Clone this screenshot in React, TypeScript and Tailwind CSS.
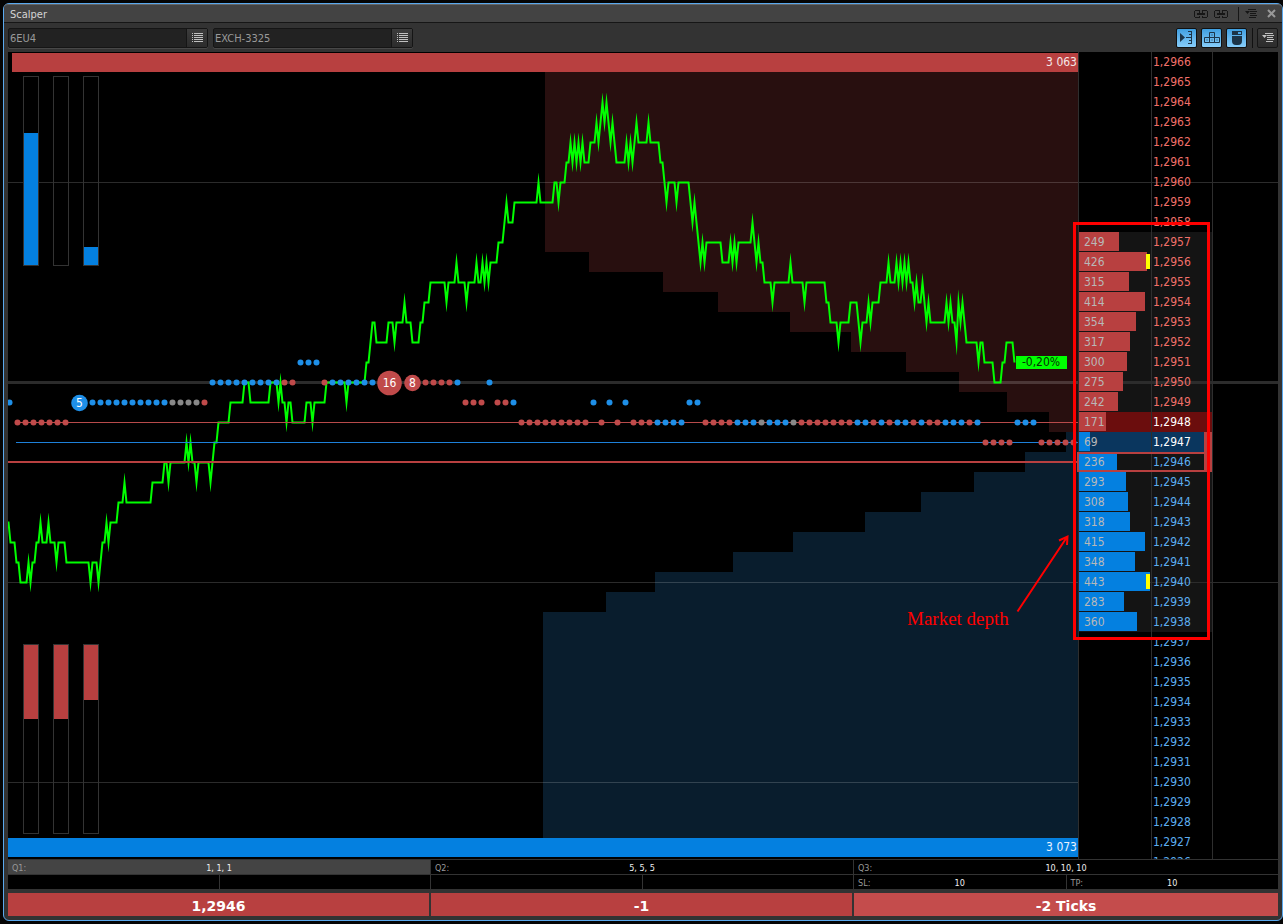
type Side = "ask" | "bid";

interface DepthRow {
  price: number;
  volume?: number;
  side: Side;
}

const FULL_BAR_VOLUME = 450;
const BEST_ASK = 12948;
const BEST_BID = 12947;
const LAST_PRICE = 12946;

const VOLUMES: Record<number, number> = {
  12957: 249,
  12956: 426,
  12955: 315,
  12954: 414,
  12953: 354,
  12952: 317,
  12951: 300,
  12950: 275,
  12949: 242,
  12948: 171,
  12947: 69,
  12946: 236,
  12945: 293,
  12944: 308,
  12943: 318,
  12942: 415,
  12941: 348,
  12940: 443,
  12939: 283,
  12938: 360,
};

const ROWS: DepthRow[] = Array.from({ length: 41 }, (_, i) => {
  const price = 12966 - i;
  return { price, volume: VOLUMES[price], side: price >= BEST_ASK ? "ask" : "bid" };
});

const formatPrice = (p: number) => `1,${String(p).slice(1)}`;

// Price curve: x, then ticks away from 1,2950
const CURVE: number[][] = [
  [8, -7], [9, -7], [11, -8], [15, -8], [17, -9], [19, -9], [21, -10], [27, -10], [29, -9], [31, -10],
  [33, -9], [35, -9], [37, -8], [39, -8], [41, -7], [43, -8], [47, -8], [49, -7], [51, -8], [55, -8],
  [57, -9], [59, -8], [65, -8], [67, -9], [89, -9], [91, -10], [93, -9], [97, -9], [99, -10], [101, -9],
  [103, -8], [105, -8], [107, -7], [109, -8], [111, -7], [117, -7], [119, -6], [123, -6], [125, -5], [127, -6],
  [151, -6], [153, -5], [163, -5], [165, -4], [167, -4], [169, -5], [171, -4], [185, -4], [187, -3], [189, -4],
  [191, -3], [193, -4], [195, -4], [197, -5], [199, -4], [209, -4], [211, -5], [213, -4], [215, -3], [217, -3],
  [219, -2], [229, -2], [231, -1], [243, -1], [245, 0], [249, 0], [251, -1], [269, -1], [271, 0], [277, 0],
  [279, -1], [281, 0], [283, -1], [285, -1], [287, -2], [289, -1], [291, -1], [293, -2], [305, -2], [307, -1],
  [311, -1], [313, -2], [315, -1], [325, -1], [327, 0], [345, 0], [347, -1], [349, 0], [365, 0], [367, 1],
  [369, 1], [371, 2], [373, 3], [375, 3], [377, 2], [387, 2], [389, 3], [393, 3], [395, 2], [397, 3],
  [403, 3], [405, 4], [407, 3], [411, 3], [413, 2], [419, 2], [421, 3], [423, 3], [425, 4], [429, 4],
  [431, 5], [445, 5], [447, 4], [449, 5], [455, 5], [457, 6], [459, 5], [465, 5], [467, 4], [469, 5],
  [475, 5], [477, 6], [479, 5], [481, 5], [483, 6], [485, 5], [487, 6], [489, 5], [491, 6], [497, 6],
  [499, 7], [503, 7], [505, 8], [507, 9], [509, 8], [513, 8], [515, 9], [537, 9], [539, 10], [541, 9],
  [553, 9], [555, 10], [557, 10], [559, 9], [561, 10], [565, 10], [567, 11], [569, 11], [571, 12], [573, 11],
  [575, 12], [577, 11], [579, 12], [581, 11], [583, 12], [585, 11], [589, 11], [591, 12], [595, 12], [597, 13],
  [599, 12], [601, 13], [603, 14], [605, 13], [607, 14], [609, 13], [611, 12], [613, 13], [615, 12], [617, 11],
  [625, 11], [627, 12], [629, 11], [631, 12], [633, 11], [635, 12], [637, 13], [639, 12], [647, 12], [649, 13],
  [651, 12], [659, 12], [661, 11], [663, 11], [665, 10], [667, 9], [669, 10], [675, 10], [677, 9], [679, 10],
  [689, 10], [691, 9], [693, 8], [695, 9], [697, 8], [699, 7], [701, 6], [703, 7], [705, 6], [707, 7],
  [721, 7], [723, 6], [729, 6], [731, 7], [733, 6], [735, 7], [737, 6], [739, 7], [751, 7], [753, 8],
  [755, 7], [757, 6], [759, 7], [761, 6], [763, 6], [765, 5], [771, 5], [773, 4], [775, 5], [789, 5],
  [791, 6], [793, 5], [803, 5], [805, 4], [807, 5], [825, 5], [827, 4], [829, 4], [831, 3], [837, 3],
  [839, 2], [841, 3], [849, 3], [851, 4], [857, 4], [859, 3], [861, 2], [863, 3], [867, 3], [869, 4],
  [871, 3], [873, 4], [879, 4], [881, 5], [887, 5], [889, 6], [891, 5], [895, 5], [897, 6], [899, 5],
  [901, 6], [903, 5], [905, 6], [907, 5], [909, 6], [911, 5], [913, 5], [915, 4], [917, 5], [919, 4],
  [921, 4], [923, 5], [925, 4], [927, 3], [929, 4], [931, 3], [945, 3], [947, 4], [949, 3], [951, 4],
  [953, 3], [955, 3], [957, 2], [959, 4], [961, 3], [963, 4], [965, 3], [967, 2], [977, 2], [979, 1],
  [981, 2], [983, 2], [985, 1], [993, 1], [995, 0], [1001, 0], [1003, 1], [1005, 1], [1007, 2], [1013, 2],
  [1015, 1],
];

// Trade prints, one letter per 8px slot: r sell, b buy, g neutral
const TRADES: { tick: number; x: number; run: string }[] = [
  { tick: 1, x: 300, run: "bbb" },
  { tick: 0, x: 212, run: "bbbbbbbbbrr" },
  { tick: 0, x: 324, run: "rbbbbbb" },
  { tick: 0, x: 425, run: "rrrrb...b" },
  { tick: -1, x: 9, run: "b" },
  { tick: -1, x: 92, run: "bbbbbbbbbbggggr" },
  { tick: -1, x: 465, run: "rrr.rrb.........b.b.b.......bb" },
  { tick: -2, x: 17, run: "rrrrrrr" },
  { tick: -2, x: 521, run: "rrrrrrrrr.r.r.rrrbbbb..rrrrbbbgbbbgrrrrrrrbbrbrbbrbrrbbbrb....bbb" },
  { tick: -3, x: 985, run: "rrrr...rrrrr" },
];

const TRADE_COLORS: Record<string, string> = { r: "#c04a4a", b: "#1e8fe8", g: "#888888" };

const BIG_TRADES = [
  { x: 79, tick: -1, r: 8, label: "5", color: "#1e8fe8" },
  { x: 389, tick: 0, r: 12, label: "16", color: "#c04a4a" },
  { x: 412, tick: 0, r: 8, label: "8", color: "#c04a4a" },
];

const tickY = (tick: number) => 382 - tick * 20;

function Chart() {
  return (
    <svg
      viewBox="8 52 1070 807"
      preserveAspectRatio="xMaxYMin slice"
      className="absolute inset-0 h-full w-full font-['DejaVu_Sans_Condensed','Noto_Sans',sans-serif]"
    >
      {/* Cumulative depth */}
      <path
        fill="#280f0f"
        d="M545 72V252H589V272H663V292H718V312H790V332H851V352H906V372H959V392H1007V412H1049V432H1078V72Z"
      />
      <path
        fill="#091d2d"
        d="M1078 432H1066V452H1025V472H974V492H921V512H865V532H793V552H733V572H655V592H606V612H543V838H1078Z"
      />

      <g fill="#fff" fillOpacity="0.17">
        <rect x="8" y="182" width="1070" height="1" />
        <rect x="8" y="381" width="1070" height="3" />
        <rect x="8" y="582" width="1070" height="1" />
        <rect x="8" y="782" width="1070" height="1" />
      </g>

      {/* Volume gauges */}
      {[23, 53, 83].map((x) => (
        <g key={x} fill="none" stroke="#333">
          <rect x={x + 0.5} y="76.5" width="15" height="189" />
          <rect x={x + 0.5} y="644.5" width="15" height="189" />
        </g>
      ))}
      <g fill="#0480e0">
        <rect x="24" y="133" width="14" height="132" />
        <rect x="84" y="247" width="14" height="18" />
      </g>
      <g fill="#b84040">
        <rect x="24" y="645" width="14" height="74" />
        <rect x="54" y="645" width="14" height="74" />
        <rect x="84" y="645" width="14" height="55" />
      </g>

      <polyline
        points={CURVE.map(([x, t]) => `${x - 0.5},${tickY(t) + 0.5}`).join(" ")}
        fill="none"
        stroke="#0f0"
        strokeWidth="2"
        strokeMiterlimit="24"
      />

      {/* Best ask, best bid, last price */}
      <rect x="17" y="422" width="1061" height="1" fill="#b84a4a" />
      <rect x="16" y="442" width="1062" height="1" fill="#1e80d8" />
      <rect x="8" y="461" width="1070" height="2" fill="#b84040" />

      {TRADES.map(({ tick, x, run }) =>
        run.split("").map((c, i) =>
          c === "." ? null : (
            <circle key={`${tick}-${x}-${i}`} cx={x + i * 8 + 0.5} cy={tickY(tick) + 0.5} r="3" fill={TRADE_COLORS[c]} />
          ),
        ),
      )}
      {BIG_TRADES.map((t) => (
        <g key={t.label}>
          <circle cx={t.x + 0.5} cy={tickY(t.tick) + 1} r={t.r + 0.3} fill={t.color} />
          <text x={t.x + 0.5} y={tickY(t.tick) + 5} textAnchor="middle" fontSize="12" fill="#fff">
            {t.label}
          </text>
        </g>
      ))}

      <rect x="1016" y="356" width="51" height="13" fill="#0f0" />
      <text x="1041" y="366" textAnchor="middle" fontSize="12" fill="#063006">
        -0,20%
      </text>

      <path d="M1017.5 611.5 1067 537M1059 540.5 1067.5 536.5 1067 545" stroke="#f00" strokeWidth="2" fill="none" />
      <text x="907" y="625" fontSize="19" fill="#f00" className="font-['Liberation_Serif',serif]">
        Market depth
      </text>
    </svg>
  );
}

function rowColors(row: DepthRow) {
  if (row.price === BEST_ASK) return "bg-[#6b0d0d] text-white";
  if (row.price === BEST_BID) return "bg-[#0a365e] text-white";
  const text = row.side === "ask" ? "text-[#f2706a]" : "text-[#5caef2]";
  return row.volume ? `bg-[#141414] ${text}` : text;
}

function gridLine(price: number) {
  if (price === 12950)
    return "bg-[image:linear-gradient(#2c2c2c,#2c2c2c)] bg-[length:100%_3px] bg-[position:0_9px] bg-no-repeat";
  if (price % 20 === 0)
    return "bg-[image:linear-gradient(#2c2c2c,#2c2c2c)] bg-[length:100%_1px] bg-[position:0_10px] bg-no-repeat";
  return "";
}

function DepthLadder() {
  return (
    <table className="w-[200px] table-fixed border-separate border-spacing-0 text-xs">
      <colgroup>
        <col className="w-[73px]" />
        <col className="w-[61px]" />
        <col />
      </colgroup>
      <tbody>
        {ROWS.map((row) => {
          const grid = gridLine(row.price);
          const colors = rowColors(row);
          return (
            <tr key={row.price}>
              <td className={`border-l border-[#2e2e2e] p-0 ${colors} ${grid}`}>
                <div className="relative h-5 pl-[5px] leading-5 text-[#b8b8b8]">
                  {row.volume && (
                    <>
                      <div
                        className={`absolute top-0 left-0 h-[19px] ${row.side === "ask" ? "bg-[#b84040]" : "bg-[#0480e0]"}`}
                        style={{ width: `${(row.volume / FULL_BAR_VOLUME) * 100}%` }}
                      />
                      <span className="relative">{row.volume}</span>
                    </>
                  )}
                  {row.volume && row.volume > 420 && (
                    <div className="absolute top-0.5 right-px h-[15px] w-1 bg-[#ff0]" />
                  )}
                  {row.price === LAST_PRICE && (
                    <div className="absolute top-0 -left-0.5 z-10 h-5 w-[135px] border-2 border-r-8 border-[#b84040]" />
                  )}
                  {row.price === BEST_BID && (
                    <div className="absolute top-0 left-[125px] z-10 h-5 w-2 bg-[#b84040]" />
                  )}
                </div>
              </td>
              <td className={`h-5 border-l border-[#2e2e2e] p-0 pl-px leading-5 ${colors} ${grid}`}>
                {formatPrice(row.price)}
              </td>
              <td className={`border-l border-[#2e2e2e] p-0 ${grid}`} />
            </tr>
          );
        })}
      </tbody>
    </table>
  );
}

function ListIcon() {
  return (
    <svg width="11" height="9" viewBox="0 0 11 9" fill="#c0c0c0">
      {[0, 2, 4, 6, 8].map((y) => (
        <path key={y} d={`M0 ${y}h1v1h-1zM2 ${y}h9v1h-9z`} />
      ))}
    </svg>
  );
}

function MenuIcon({ color }: { color: string }) {
  return (
    <svg width="12" height="9" viewBox="0 0 12 9" fill={color}>
      <path d="M3 0h8v1H3zM5 2h7v1H5zM5 4h6v1H5zM5 6h7v1H5zM4 8h7v1H4zM0 2h5L2.5 5z" />
    </svg>
  );
}

function LinkIcon() {
  return (
    <svg width="14" height="8" viewBox="0 0 14 8" fill="none" stroke="#161616" shapeRendering="crispEdges">
      <path d="M5.5 2.5V.5H1.5L.5 1.5V6.500L1.5 7.5H5.5V5.5M8.5 2.5V.5H12.5L13.5 1.5V6.500L12.5 7.5H8.5V5.5" />
      <path d="M3 4H11" strokeWidth="2" />
    </svg>
  );
}

function Picker({ id, label, value }: { id: string; label: string; value: string }) {
  return (
    <div className="flex h-5 w-[200px] rounded-xs border border-[#151515] bg-[#222] shadow-[0_1px_0_#484848]">
      <label htmlFor={id} className="sr-only">
        {label}
      </label>
      <input
        id={id}
        defaultValue={value}
        className="h-[18px] min-w-0 flex-1 bg-transparent pt-px pl-px text-[11px] leading-4 text-[#999] outline-none"
      />
      <button
        aria-label={`Choose ${label}`}
        className="flex w-[21px] items-center justify-center border-l border-[#151515] bg-linear-to-b from-[#3c3c3c] to-[#2c2c2c]"
      >
        <ListIcon />
      </button>
    </div>
  );
}

const TOOL_BUTTON =
  "flex h-5 w-[21px] items-center justify-center rounded-xs border border-[#111] bg-linear-to-b from-[#3f9fe0] to-[#86cdfa]";

function Toolbar() {
  return (
    <div className="flex h-[29px] shrink-0 items-center gap-[5px] px-1">
      <Picker id="instrument" label="instrument" value="6EU4" />
      <Picker id="account" label="account" value="EXCH-3325" />
      <div className="ml-auto flex items-center gap-1">
        <button className={TOOL_BUTTON} aria-label="Center on price">
          <svg width="15" height="13" viewBox="0 0 15 13" fill="#1c3448">
            <path d="M1 2v9l5-4.5zM12 0h1v13h-1zM9 0h3v1H9zM10 3h2v1h-2zM7 6h5v1H7zM10 9h2v1h-2zM9 12h3v1H9z" />
          </svg>
        </button>
        <button className={TOOL_BUTTON} aria-label="Hot keys">
          <svg width="16" height="11" viewBox="0 0 16 11" className="shrink-0" fill="none" stroke="#1c3448">
            <path d="M5.5 .5h5v5h-5zM.5 5.5h5v5h-5zM5.5 5.5h5v5h-5zM10.5 5.5h5v5h-5z" />
            <path d="M7.500 3h1M2.5 8h1M7.5 8h1M12.5 8h1" />
          </svg>
        </button>
        <button className={TOOL_BUTTON} aria-label="Mouse trading">
          <svg width="10" height="14" viewBox="0 0 10 14" fill="#1c3448">
            <path d="M0 0h5v4H0zM5 0h5v4H5zM0 5h10v5q0 4-4 4h-2q-4 0-4-4z" />
            <path d="M6 1h3v2H6z" fill="#4ca8e8" />
          </svg>
        </button>
        <div className="ml-px h-5 w-px bg-[#111]" />
        <button
          aria-label="Settings"
          className="flex h-5 w-[21px] items-center justify-center rounded-xs border border-[#161616] bg-linear-to-b from-[#3a3a3a] to-[#2c2c2c]"
        >
          <MenuIcon color="#c0c0c0" />
        </button>
      </div>
    </div>
  );
}

function TitleBar() {
  return (
    <div className="flex h-[19px] shrink-0 items-center rounded-t-sm border-t border-b border-t-[#666] border-b-[#161616] bg-[#434343] pr-1.5 pl-1.5">
      <h1 className="pt-0.5 text-[11px] leading-[15px] text-[#d4d4d4]">Scalper</h1>
      <div className="ml-auto flex items-center gap-[6px]">
        <button aria-label="Link instrument">
          <LinkIcon />
        </button>
        <button aria-label="Link account">
          <LinkIcon />
        </button>
        <div className="ml-1 h-[14px] w-px bg-[#161616]" />
        <button aria-label="Window menu">
          <MenuIcon color="#161616" />
        </button>
        <button aria-label="Close" className="ml-1">
          <svg width="9" height="9" viewBox="0 0 9 9" stroke="#999" strokeWidth="2">
            <path d="M1 1l7 7M8 1 1 8" />
          </svg>
        </button>
      </div>
    </div>
  );
}

function Quantity({ label, value, active }: { label: string; value: string; active?: boolean }) {
  return (
    <div className={`flex h-[14px] px-1 pt-0.5 leading-3 ${active ? "bg-[#444]" : "bg-black"}`}>
      <span className="flex-1 text-[#999]">{label}</span>
      <span className="text-[#eee]">{value}</span>
      <span className="flex-1" />
    </div>
  );
}

const ORDER_BUTTON = "h-[23px] pt-0.5 leading-5";

export default function App() {
  return (
    <div className="flex h-screen bg-[#050505] pt-[3px] pb-[3px] pl-[3px] font-['DejaVu_Sans_Condensed','Noto_Sans',sans-serif]">
      <div className="flex min-w-0 flex-1 flex-col rounded-md border border-[#5aa9ee] bg-[#333]">
        <TitleBar />
        <Toolbar />

        <div className="relative mx-1 flex min-h-0 flex-1 overflow-hidden bg-black">
          <main className="relative flex min-w-0 flex-1 flex-col justify-between">
            <Chart />
            <div className="relative mt-px ml-1 h-[19px] bg-[#b84040] pr-px text-right text-xs leading-[19px] text-[#f4e8e8]">
              3 063
            </div>
            <div className="relative mb-0.5 h-[19px] bg-[#0480e0] pr-px text-right text-xs leading-[19px] text-[#e8f2ff]">
              3 073
            </div>
          </main>
          <DepthLadder />
          {/* Callout around the depth rows */}
          <div className="pointer-events-none absolute top-[170px] right-[68px] z-20 h-[418px] w-[137px] border-[3px] border-[#f00]" />
        </div>

        <div className="mx-1 grid shrink-0 grid-cols-[422fr_422fr_424fr] gap-x-px border-t border-[#333] text-[9px]">
          <div className="flex flex-col gap-px">
            <Quantity label="Q1:" value="1, 1, 1" active />
            <div className="grid h-[14px] grid-cols-2 gap-px">
              <div className="bg-black" />
              <div className="bg-black" />
            </div>
          </div>
          <div className="flex flex-col gap-px">
            <Quantity label="Q2:" value="5, 5, 5" />
            <div className="grid h-[14px] grid-cols-2 gap-px">
              <div className="bg-black" />
              <div className="bg-black" />
            </div>
          </div>
          <div className="flex flex-col gap-px">
            <Quantity label="Q3:" value="10, 10, 10" />
            <div className="grid grid-cols-2 gap-px">
              <Quantity label="SL:" value="10" />
              <Quantity label="TP:" value="10" />
            </div>
          </div>
        </div>

        <div className="m-1 grid shrink-0 grid-cols-[421fr_421fr_424fr] gap-0.5 font-['DejaVu_Sans','Noto_Sans',sans-serif] text-sm font-bold text-white">
          <button className={`${ORDER_BUTTON} bg-[#b84040]`}>1,2946</button>
          <button className={`${ORDER_BUTTON} bg-[#b84040]`}>-1</button>
          <button className={`${ORDER_BUTTON} bg-[#c44c4c]`}>-2 Ticks</button>
        </div>
      </div>
    </div>
  );
}
